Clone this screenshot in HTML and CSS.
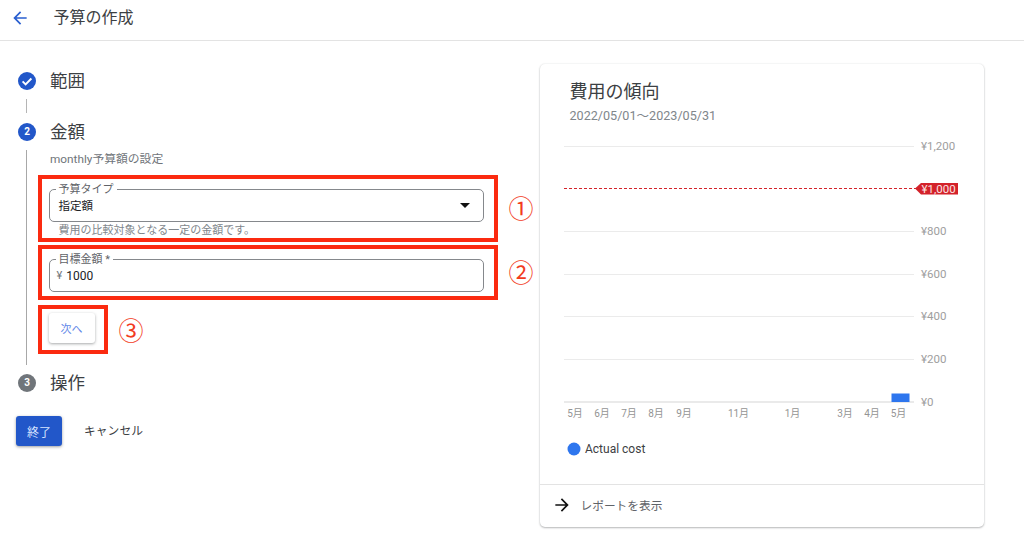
FILE: index.html
```html
<!DOCTYPE html>
<html lang="ja">
<head>
<meta charset="utf-8">
<title>予算の作成</title>
<link rel="stylesheet" href="styles.css">
</head>
<body>
<header class="topbar">
  <svg class="back" viewBox="0 0 24 24" width="20" height="20"><path d="M20 11H7.83l5.59-5.59L12 4l-8 8 8 8 1.41-1.41L7.83 13H20z"/></svg>
  <h1 class="page-title">予算の作成</h1>
</header>
<main class="main">
  <section class="stepper">
    <div class="step-head">
      <svg class="step-icon" viewBox="0 0 18 18" width="18" height="18"><circle cx="9" cy="9" r="9" fill="#2257c9"/><path d="M4.6 9.3l3 3 5.8-5.8" fill="none" stroke="#fff" stroke-width="1.9"/></svg>
      <span class="step-name">範囲</span>
    </div>
    <div class="connector"></div>
    <div class="step-head">
      <span class="step-num active">2</span>
      <span class="step-name">金額</span>
    </div>
    <div class="step-body">
      <p class="step-desc">monthly予算額の設定</p>
      <div class="mark-row mark-row-first">
        <div class="mark-box box-type">
          <fieldset class="field">
            <legend class="field-label">予算タイプ</legend>
            <div class="field-value">
              <span>指定額</span>
              <svg class="caret" viewBox="0 0 10 5" width="10" height="5"><path d="M0 0h10L5 5z"/></svg>
            </div>
          </fieldset>
          <p class="hint">費用の比較対象となる一定の金額です。</p>
        </div>
        <span class="mark-num">①</span>
      </div>
      <div class="mark-row">
        <div class="mark-box box-amount">
          <fieldset class="field">
            <legend class="field-label">目標金額 *</legend>
            <div class="field-value field-start"><span class="yen">¥</span><span class="amount">1000</span></div>
          </fieldset>
        </div>
        <span class="mark-num">②</span>
      </div>
      <div class="mark-row mark-row-btn">
        <div class="mark-box box-next"><button class="btn-next">次へ</button></div>
        <span class="mark-num">③</span>
      </div>
    </div>
    <div class="step-head">
      <span class="step-num idle">3</span>
      <span class="step-name">操作</span>
    </div>
    <div class="actions">
      <button class="btn-finish">終了</button>
      <button class="btn-cancel">キャンセル</button>
    </div>
  </section>
  <aside class="card">
    <div class="card-head">
      <h2 class="card-title">費用の傾向</h2>
      <p class="card-date">2022/05/01～2023/05/31</p>
    </div>
    <svg class="chart" viewBox="0 0 444 354" width="444" height="354">
      <g class="grid">
        <path d="M24 16.5H374M24 101.5H374M24 144.5H374M24 186.5H374M24 229.5H374"/>
        <path class="axis" d="M24 272H374"/>
      </g>
      <path class="limit" d="M24 58.5H376"/>
      <path class="tag" d="M375 58.5l6-5.5h37v11.5h-37z"/>
      <g class="y-label">
        <text x="381" y="20">¥1,200</text>
        <text class="tag-text" x="381.500" y="62.5">¥1,000</text>
        <text x="381" y="105">¥800</text>
        <text x="381" y="148">¥600</text>
        <text x="381" y="190">¥400</text>
        <text x="381" y="233">¥200</text>
        <text x="381" y="276">¥0</text>
      </g>
      <rect class="bar" x="351.500" y="263.500" width="18" height="8.500"/>
      <g class="x-label">
        <text x="35" y="287">5月</text>
        <text x="62" y="287">6月</text>
        <text x="89" y="287">7月</text>
        <text x="116" y="287">8月</text>
        <text x="144" y="287">9月</text>
        <text x="198.500" y="287">11月</text>
        <text x="252.500" y="287">1月</text>
        <text x="305" y="287">3月</text>
        <text x="332" y="287">4月</text>
        <text x="358.500" y="287">5月</text>
      </g>
      <circle class="bar" cx="34" cy="319" r="6.500"/>
      <text class="legend" x="45" y="323">Actual cost</text>
    </svg>
    <div class="card-foot">
      <svg viewBox="0 0 24 24" width="20" height="20"><path d="M12 4l-1.41 1.41L16.170 11H4v2h12.170l-5.580 5.590L12 20l8-8z" fill="#111"/></svg>
      <span class="foot-text">レポートを表示</span>
    </div>
  </aside>
</main>
</body>
</html>
```
FILE: styles.css
```css
* { box-sizing: border-box; }
html, body { margin: 0; height: 100%; }
body {
  width: 1024px;
  height: 556px;
  overflow: hidden;
  background: #fff;
  color: #3c4043;
  font-family: Roboto, "Noto Sans CJK JP", sans-serif;
}
.topbar {
  height: 41px;
  border-bottom: 1px solid #e3e3e3;
  display: flex;
  align-items: center;
  padding: 0 0 5px 10px;
}
.back { fill: #2a5fd0; }
.page-title {
  margin: 0 0 0 23.500px;
  font-size: 16px;
  font-weight: 400;
  line-height: 22px;
  color: #3c4043;
}
.main { display: flex; align-items: flex-start; }
.stepper { width: 540px; padding-top: 29px; }
.step-head {
  display: flex;
  align-items: center;
  height: 22px;
  padding-left: 18px;
}
.step-icon, .step-num { flex: none; width: 18px; height: 18px; }
.step-num {
  border-radius: 50%;
  color: #fff;
  font-size: 10px;
  font-weight: 700;
  line-height: 18px;
  text-align: center;
}
.step-num.active { background: #2257c9; }
.step-num.idle { background: #70757a; }
.step-name {
  margin-left: 14px;
  font-size: 17.500px;
  line-height: 22px;
  color: #3c4043;
}
.connector {
  width: 1px;
  height: 14px;
  margin: 7px 0 8px 26px;
  background: #b5b5b5;
}
.step-body {
  height: 215px;
  margin: 7px 0 7px 26px;
  padding-left: 11px;
  border-left: 1px solid #a8a8a8;
}
.step-desc {
  margin: 0;
  padding: 1px 0 0 12px;
  font-size: 11.800px;
  line-height: 17px;
  color: #70757a;
}
.mark-row { display: flex; align-items: center; }
.mark-row-first { margin-top: 7px; }
.mark-row + .mark-row { margin-top: 3px; }
.mark-row.mark-row-btn { margin-top: 5px; }
.mark-box { width: 459.500px; border: 4.500px solid #fb2a10; flex: none; }
.box-type { height: 67px; padding: 4.500px 10px 0 6.500px; }
.box-amount { height: 55px; padding: 4.500px 10px 0 6.500px; }
.box-next {
  width: 69.500px;
  height: 49px;
  padding: 4px 0 0 6.500px;
}
.mark-num {
  margin: -4px 0 0 11px;
  font-size: 25px;
  line-height: 30px;
  color: #f23c1e;
  font-family: "Noto Sans CJK JP", sans-serif;
}
.box-next + .mark-num { margin: -2px 0 0 11px; }
.field {
  margin: 0;
  height: 38px;
  padding: 0 9px;
  border: 1px solid #85888c;
  border-radius: 5px;
  min-width: 0;
}
.field-label {
  padding: 0 3px;
  margin-left: -3px;
  font-size: 11px;
  line-height: 12px;
  color: #5f6368;
}
.field-value {
  display: flex;
  align-items: center;
  justify-content: space-between;
  height: 16px;
  margin-top: 2px;
  font-size: 11.500px;
  line-height: 16px;
  color: #202124;
}
.field-start { justify-content: flex-start; }
.caret { margin-right: 4px; fill: #111; }
.yen { color: #70757a; font-size: 11px; margin-right: 4px; margin-left: -2px; }
.amount { font-size: 12px; }
.hint {
  margin: 2px 0 0 10px;
  font-size: 11px;
  line-height: 14px;
  color: #80868b;
}
button { font-family: inherit; border: 0; border-radius: 3px; padding: 0; }
.btn-next {
  width: 46px;
  height: 30px;
  background: #fff;
  color: #5f88e8;
  font-size: 11px;
  box-shadow: 0 1px 3px rgba(60, 64, 67, .45);
}
.actions {
  display: flex;
  align-items: center;
  margin-top: 22px;
  padding-left: 16px;
}
.btn-finish {
  width: 46px;
  height: 30px;
  background: #2257c9;
  color: #d7e3ff;
  font-size: 12px;
  box-shadow: 0 1px 3px rgba(60, 64, 67, .5);
}
.btn-cancel {
  margin-left: 22px;
  background: none;
  color: #3c4043;
  font-size: 11.800px;
  line-height: 28px;
}
.card {
  width: 444px;
  height: 463px;
  margin-top: 23px;
  border-radius: 5px;
  background: #fff;
  box-shadow: 0 1px 2px rgba(60, 64, 67, .35), 0 0 2px rgba(60, 64, 67, .12);
}
.card-head { height: 66px; padding: 16px 0 0 29.500px; }
.card-title {
  margin: 0;
  font-size: 18px;
  font-weight: 400;
  line-height: 24px;
  color: #3c4043;
}
.card-date {
  margin: 4px 0 0;
  font-size: 12.600px;
  line-height: 16px;
  color: #80868b;
}
.chart { display: block; }
.grid path { stroke: #ebebeb; stroke-width: 1; fill: none; }
.grid .axis { stroke: #e3e3e3; stroke-width: 1.500; }
.limit { stroke: #d3222a; stroke-width: 1; stroke-dasharray: 3 2; fill: none; }
.tag { fill: #d3222a; }
.y-label text { font-size: 11.500px; fill: #9e9e9e; }
.y-label .tag-text { fill: #fbe3e3; }
.x-label text { font-size: 10px; fill: #949494; text-anchor: middle; }
.bar { fill: #2e76ee; }
.legend { font-size: 12px; fill: #3c4043; }
.card-foot {
  display: flex;
  align-items: center;
  height: 43px;
  padding: 0 0 3px 11.500px;
  border-top: 1px solid #e3e3e3;
}
.foot-text { margin-left: 9px; font-size: 11.700px; color: #5f6368; }
```
